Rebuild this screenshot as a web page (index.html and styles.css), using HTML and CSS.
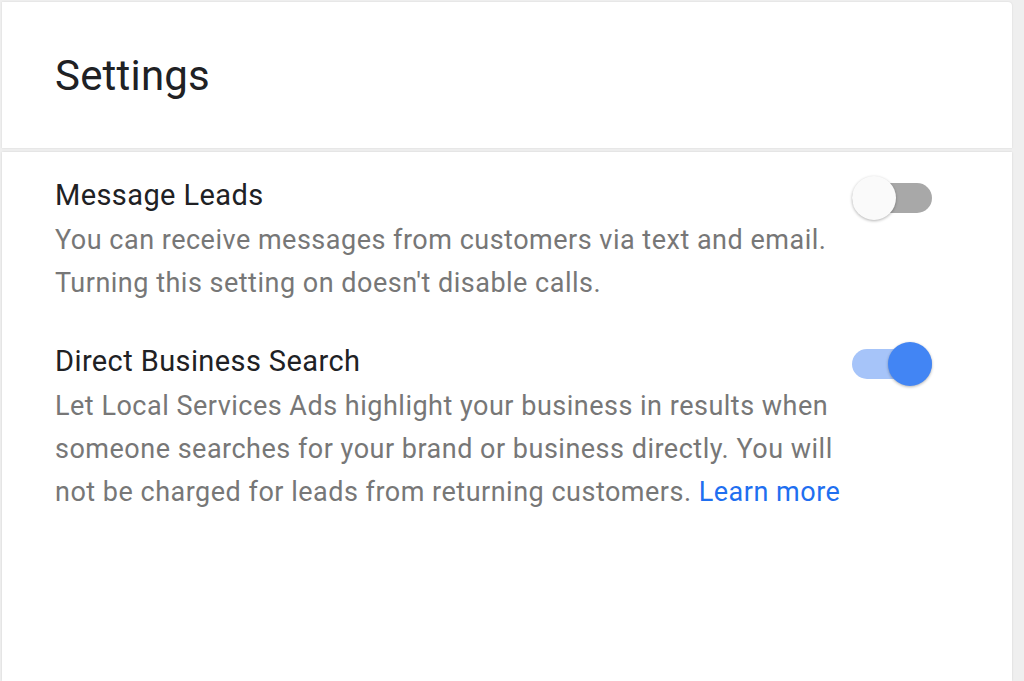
FILE: index.html
```html
<!DOCTYPE html>
<html>
<head>
<meta charset="utf-8">
<link rel="stylesheet" href="styles.css">
</head>
<body>
<div class="page">
  <header class="card header">
    <h1 class="title">Settings</h1>
  </header>
  <section class="card body">
    <div class="setting">
      <div class="text">
        <div class="name">Message Leads</div>
        <div class="desc">You can receive messages from customers via text and email. Turning this setting on doesn't disable calls.</div>
      </div>
      <div class="toggle off"><span class="track"></span><span class="thumb"></span></div>
    </div>
    <div class="setting">
      <div class="text">
        <div class="name">Direct Business Search</div>
        <div class="desc">Let Local Services Ads highlight your business in results when someone searches for your brand or business directly. You will not be charged for leads from returning customers. <a class="link" href="#">Learn more</a></div>
      </div>
      <div class="toggle on"><span class="track"></span><span class="thumb"></span></div>
    </div>
  </section>
</div>
</body>
</html>
```

FILE: styles.css
```css
html, body {
  margin: 0;
  padding: 0;
  height: 100%;
}
body {
  background: #efefef;
  font-family: Roboto, "Noto Sans", sans-serif;
  overflow: hidden;
}
.page {
  display: flex;
  flex-direction: column;
  gap: 4px;
  padding: 2px 12px 0 2px;
  height: 100%;
  box-sizing: border-box;
}
.card {
  background: #fff;
  box-shadow: 0 0 2px rgba(0,0,0,0.12);
}
.header {
  height: 146px;
  border-radius: 0 4px 0 0;
  display: flex;
  align-items: center;
  padding-left: 53px;
  box-sizing: border-box;
}
.title {
  margin: 0;
  font-weight: 400;
  font-size: 42px;
  color: #202124;
  letter-spacing: 0.2px;
}
.body {
  flex: 1;
  padding: 23px 80px 0 53px;
  display: flex;
  flex-direction: column;
  gap: 36px;
}
.setting {
  display: flex;
  justify-content: space-between;
  align-items: flex-start;
}
.text {
  width: 795px;
}
.name {
  font-size: 29px;
  color: #202124;
  line-height: 40px;
  letter-spacing: 0.4px;
}
.desc {
  margin-top: 4px;
  font-size: 27px;
  color: #777777;
  line-height: 43px;
  letter-spacing: 0.5px;
}
.link {
  color: #1f6ff0;
  text-decoration: none;
}
.toggle {
  position: relative;
  width: 80px;
  height: 44px;
  margin-top: 1px;
  flex: none;
}
.track {
  position: absolute;
  left: 0;
  top: 7px;
  width: 80px;
  height: 30px;
  border-radius: 15px;
}
.thumb {
  position: absolute;
  top: 0;
  width: 44px;
  height: 44px;
  border-radius: 50%;
}
.off .track { background: #a8a8a8; }
.off .thumb {
  left: 0;
  background: #fafafa;
  box-shadow: 0 1px 3px rgba(0,0,0,0.3);
}
.on .track { background: #a6c4f9; }
.on .thumb {
  right: 0;
  background: #4285f4;
  box-shadow: 0 1px 3px rgba(0,0,0,0.3);
}
```
